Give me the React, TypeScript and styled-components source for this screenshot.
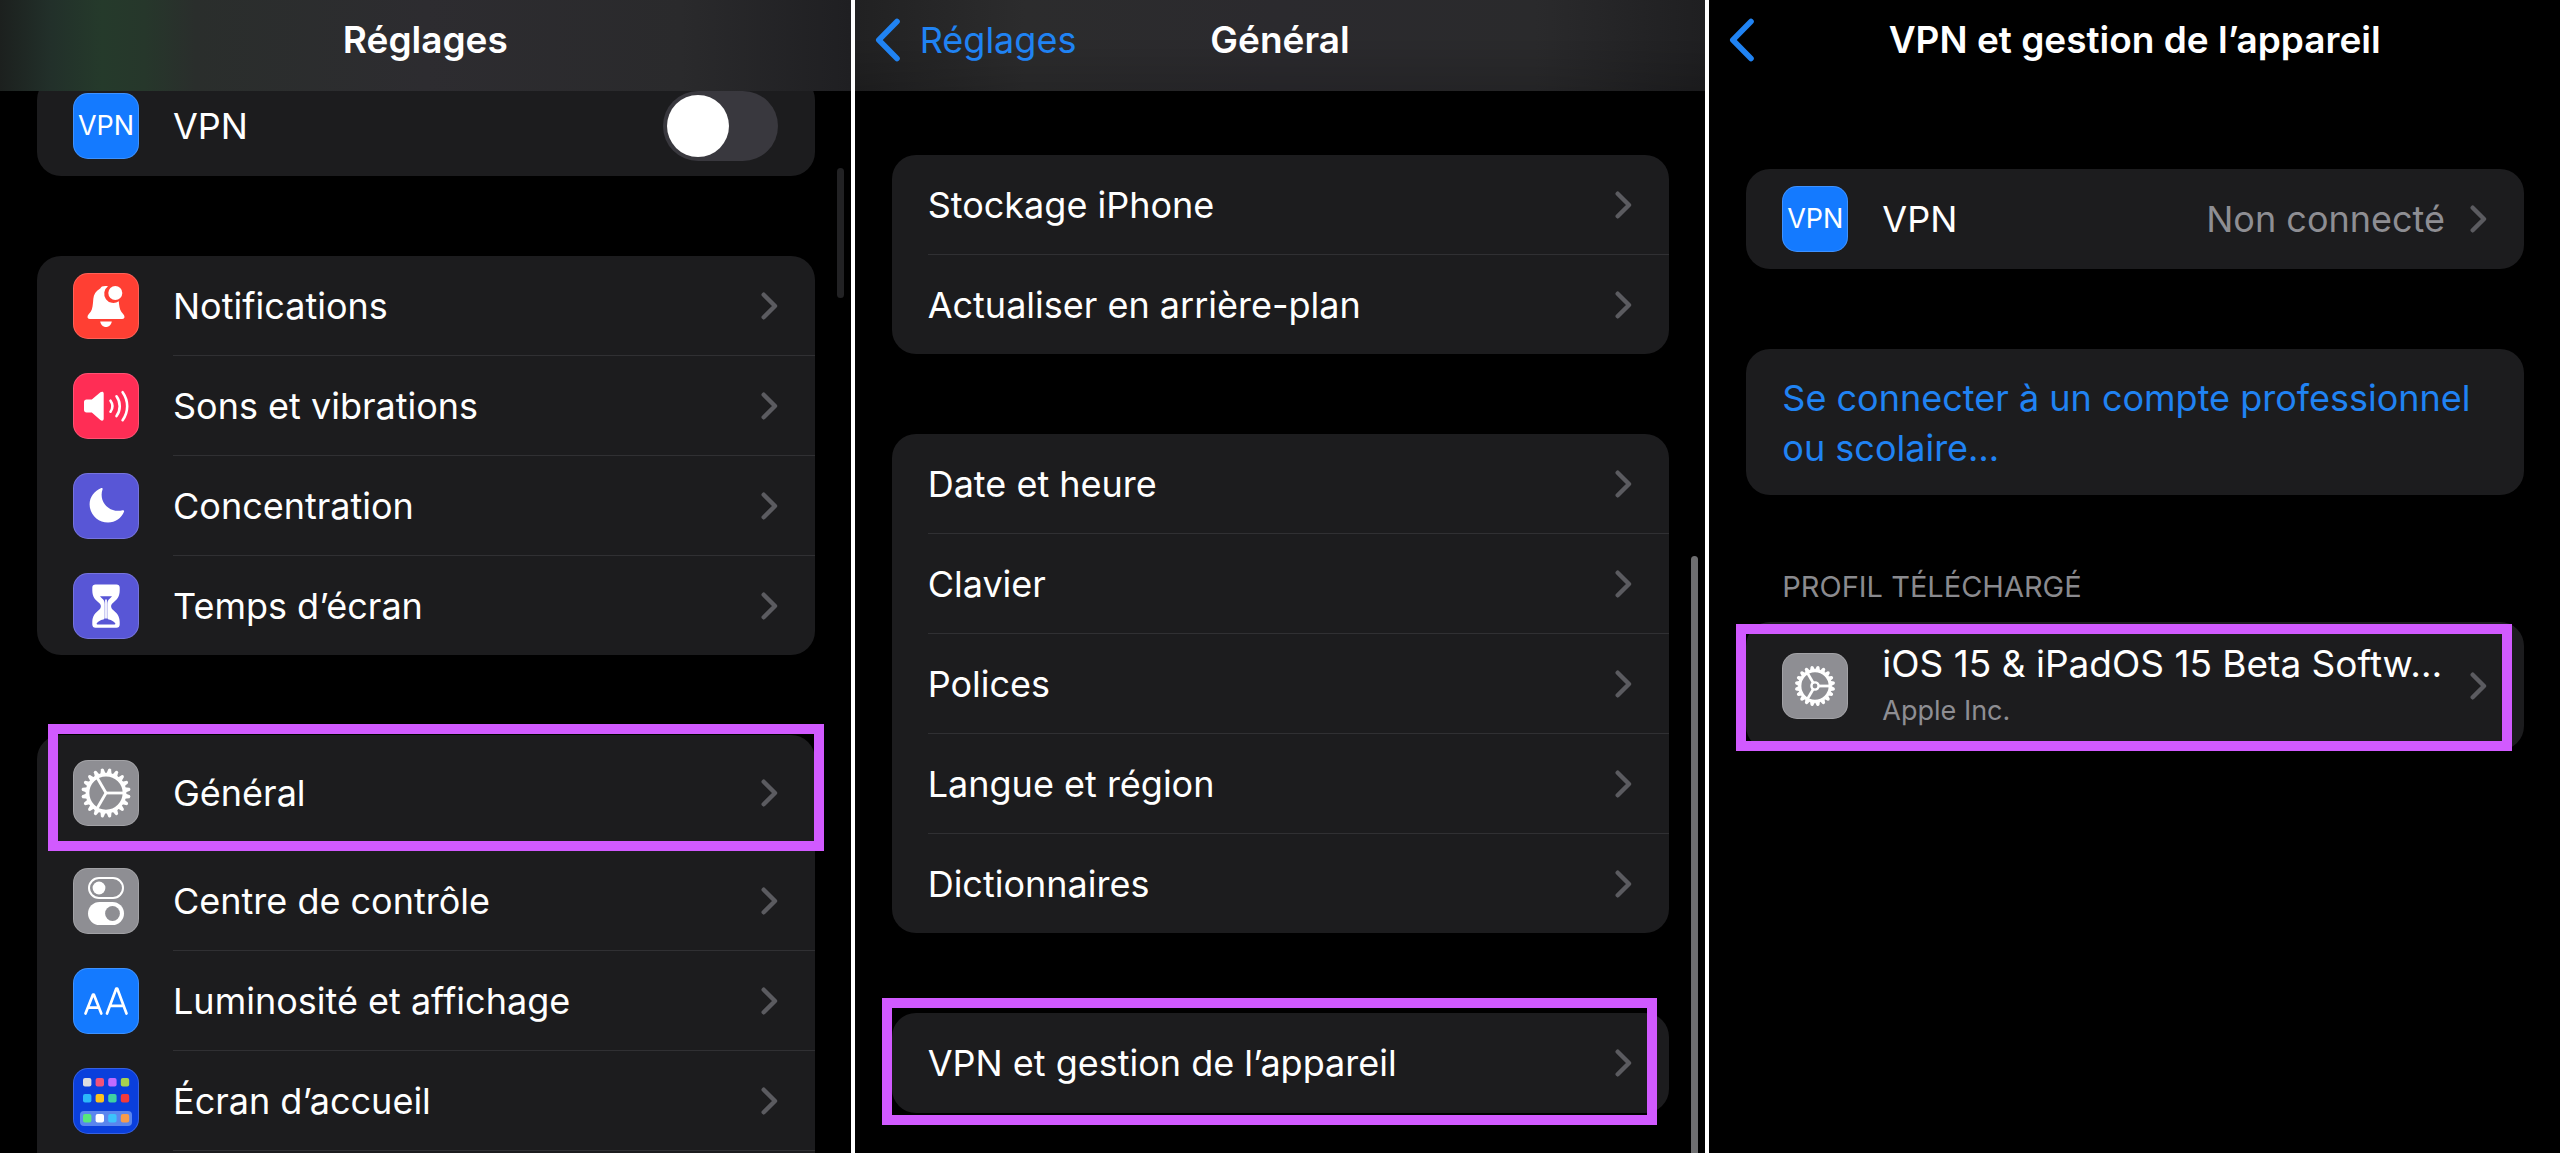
import React from "react";
import styled, { createGlobalStyle, css } from "styled-components";

const GlobalStyle = createGlobalStyle`
  * { box-sizing: border-box; }
  body {
    margin: 0;
    background: #000;
    color: #fff;
    font-family: Inter, "Liberation Sans", sans-serif;
    font-size: 36px;
    line-height: 50px;
    overflow: hidden;
  }
  h1, h2, p, ul { margin: 0; padding: 0; font: inherit; }
  a { color: inherit; text-decoration: none; }
`;

const Board = styled.main`
  display: flex;
  gap: 4px;
  height: 100vh;
  background: #fff;
`;

const Screen = styled.section`
  position: relative;
  flex: 1 1 0;
  min-width: 0;
  overflow: hidden;
  background: #000;
`;

type Tone = "green" | "grey" | "none";

const barTones = {
  green: css`
    background: linear-gradient(
      90deg,
      #1c201e 0%,
      #22302a 6%,
      #253a2b 12%,
      #26372b 17%,
      #2a2e2c 23%,
      #2d2c30 50%,
      #2a2a2c 80%,
      #1f1f22 100%
    );
  `,
  grey: css`
    background:
      linear-gradient(180deg, transparent 40%, #00000026 100%),
      linear-gradient(90deg, #212122 0%, #2c2c2d 20%, #2b2a2e 50%, #2a2a2c 80%, #1f1f21 100%);
  `,
  none: css`
    background: #000;
  `,
};

const Bar = styled.header<{ $tone: Tone }>`
  position: relative;
  z-index: 1;
  display: grid;
  grid-template-columns: 1fr auto 1fr;
  align-items: center;
  height: 91px;
  padding: 0 20px 11px;
  ${(p) => barTones[p.$tone]}
`;

const Title = styled.h1`
  grid-column: 2;
  font-size: 37px;
  font-weight: 600;
  white-space: nowrap;
`;

const Back = styled.a`
  display: flex;
  align-items: center;
  gap: 20px;
  color: #2083f3;
`;

const Content = styled.div<{ $top: number }>`
  display: flex;
  flex-direction: column;
  gap: 80px;
  margin-top: ${(p) => p.$top}px;
  padding: 0 36px 0 37px;
`;

const Card = styled.ul`
  list-style: none;
  border-radius: 24px;
  background: #1c1c1e;
`;

const Item = styled.li`
  position: relative;
`;

const NextItem = styled.li`
  height: 100px;
`;

const rowStyle = css<{ $tall?: number }>`
  display: flex;
  align-items: stretch;
  gap: 34px;
  height: ${(p) => p.$tall ?? 100}px;
  padding-left: 36px;
`;

const RowLink = styled.a<{ $tall?: number }>`
  ${rowStyle}
`;

const RowLabel = styled.label<{ $tall?: number }>`
  ${rowStyle}
`;

const Body = styled.span`
  display: flex;
  flex: 1;
  align-items: center;
  gap: 25px;
  min-width: 0;
  padding-right: 37px;
  ${Item}:not(:last-child) & {
    border-bottom: 1px solid #303033;
  }
`;

const Name = styled.span<{ $detailed?: boolean }>`
  flex: 1;
  min-width: 0;
  font-size: ${(p) => (p.$detailed ? 37 : 36)}px;
  white-space: nowrap;
`;

const Value = styled.span`
  color: #8e8e93;
`;

const Sub = styled.span`
  display: block;
  color: #8e8e93;
  font-size: 27px;
  line-height: 44px;
`;

const Tile = styled.span<{ $bg: string }>`
  display: flex;
  flex: none;
  align-self: center;
  align-items: center;
  justify-content: center;
  width: 66px;
  height: 66px;
  border-radius: 15px;
  background: ${(p) => p.$bg};
  box-shadow: inset 0 0 0 1px #ffffff2e;
  font-size: 27px;
`;

const Switch = styled.input`
  appearance: none;
  width: 115px;
  height: 70px;
  margin: 0;
  padding: 4px;
  border-radius: 35px;
  background: #39383e;
  &::before {
    content: "";
    display: block;
    width: 62px;
    height: 62px;
    border-radius: 50%;
    background: #fff;
  }
  &:checked {
    background: #30d158;
  }
  &:checked::before {
    margin-left: auto;
  }
`;

const Account = styled.a`
  display: block;
  padding: 24px 36px 22px;
  color: #2083f3;
`;

const Group = styled.div`
  display: flex;
  flex-direction: column;
  gap: 15px;
  margin-top: -8px;
`;

const GroupTitle = styled.h2`
  padding-left: 36px;
  color: #8a8a8e;
  font-size: 29px;
  line-height: 40px;
`;

const Highlight = styled.span<{ $left: number; $top: number }>`
  position: absolute;
  left: ${(p) => p.$left}px;
  top: ${(p) => p.$top}px;
  width: calc(100% - 2px);
  height: 127px;
  border: 10px solid #d15aff;
  pointer-events: none;
`;

const Thumb = styled.span<{ $top: string; $height: string; $color: string }>`
  position: absolute;
  top: ${(p) => p.$top};
  right: 7px;
  width: 7px;
  height: ${(p) => p.$height};
  border-radius: 4px;
  background: ${(p) => p.$color};
`;

const Chevron = () => (
  <svg width="17" height="28" viewBox="0 0 17 28" fill="none" aria-hidden="true">
    <path d="M2.7 2.7 14 14 2.7 25.3" stroke="#5b5b60" strokeWidth="4.4" strokeLinecap="round" strokeLinejoin="round" />
  </svg>
);

const BackArrow = () => (
  <svg width="25" height="44" viewBox="0 0 25 44" fill="none" aria-hidden="true">
    <path d="M22 3.5 3.8 22 22 40.5" stroke="currentColor" strokeWidth="5.6" strokeLinecap="round" strokeLinejoin="round" />
  </svg>
);

const Glyph = ({ children }: { children: React.ReactNode }) => (
  <svg width="66" height="66" viewBox="0 0 66 66" fill="none" aria-hidden="true">
    {children}
  </svg>
);

const BellIcon = () => (
  <Glyph>
    <path
      fill="#fff"
      d="M35 13.3c-1.5-.6-4.500-.6-6 .3-.9.6-1.200 1.500-2.200 2.200-4 2.200-6.100 5.700-6.500 10.200-.4 5.500-.8 10-2.600 12.800-1.200 1.900-3.200 3.300-3.200 5.100 0 1.300 1 2 2.300 2h32.400c1.300 0 2.300-.7 2.300-2 0-1.800-2-3.200-3.200-5.100-1.600-2.600-2.200-6.300-2.500-10.600a8.800 8.800 0 0 1-10.800-14.900z"
    />
    <circle cx="42.300" cy="20" r="7" fill="#fff" />
    <path fill="#fff" d="M27.200 48.500h11.600c-.6 3.300-2.900 5.500-5.800 5.500s-5.200-2.200-5.800-5.500z" />
  </Glyph>
);

const SoundIcon = () => (
  <Glyph>
    <path
      fill="#fff"
      d="M13.500 26.500h5.300l8.600-7.200c1.500-1.200 3.300-.7 3.300 1.200v25.300c0 1.900-1.800 2.400-3.300 1.200l-8.600-7.500h-5.300c-1.500 0-2.500-1-2.500-2.500v-8c0-1.500 1-2.500 2.500-2.500z"
    />
    <g stroke="#fff" strokeWidth="2.600" strokeLinecap="round">
      <path d="M37.500 27.700c2.400 3.300 2.400 7.700 0 11" />
      <path d="M43.500 23.300c4.300 5.900 4.300 13.900 0 19.800" />
      <path d="M49.600 19.200c6.100 8.500 6.100 19.500 0 28" />
    </g>
  </Glyph>
);

const MoonIcon = () => (
  <Glyph>
    <path
      fill="#fff"
      d="M28.300 15c.9-.4 1.700.3 1.300 1.300-4.200 11.500 5.600 24.300 20 21 1-.3 1.800.5 1.400 1.500-2.500 6.300-8.700 10.800-15.900 10.800-10.200 0-18.500-8.300-18.500-18.300 0-7.200 4.800-13.600 11.700-16.300z"
    />
  </Glyph>
);

const HourglassIcon = () => (
  <Glyph>
    <path
      fill="#fff"
      d="M22.500 11.500h21c2 0 3.200 1.200 3.200 3v3c0 6.500-3.200 9.300-6 11.700-1.800 1.500-2.600 2.400-2.600 4s.8 2.700 2.600 4.200c2.800 2.300 6 5.200 6 11.600v2.500c0 2-1.200 3.300-3.200 3.300h-21c-2 0-3.200-1.300-3.200-3.300V49c0-6.400 3.200-9.300 6-11.600 1.800-1.500 2.600-2.600 2.600-4.200s-.8-2.500-2.600-4c-2.800-2.400-6-5.200-6-11.700v-3c0-1.800 1.200-3 3.200-3z"
    />
    <path
      fill="#5856d6"
      d="M27 23.300h12c-.6 1-1.500 1.700-2.400 2.500-1.600 1.300-2.300 3-2.300 5.200v13.500c0 1 .5 1.700 1.500 2 2.700.6 5.200 1.900 6.400 3.700.4.700.2 1.200-.6 1.200H24.400c-.8 0-1-.5-.6-1.200 1.200-1.800 3.700-3.100 6.400-3.700 1-.3 1.500-1 1.500-2V31c0-2.200-.7-3.900-2.300-5.200-.9-.8-1.800-1.500-2.400-2.500z"
    />
    <path stroke="#fff" strokeWidth="1.800" d="M33 26.500v19" />
  </Glyph>
);

const Cog = ({ teeth, radius, hub }: { teeth: number; radius: number; hub?: boolean }) => {
  const ring = radius * 0.74;
  const spokes = [0, 120, 240];
  return (
    <Glyph>
      {Array.from({ length: teeth }, (_, i) => (
        <path
          key={i}
          transform={`rotate(${((i + 0.5) * 360) / teeth} 33 33)`}
          d={`M${33 + ring} 30.200 L${33 + radius - 1} 31.600 Q${33 + radius + 0.6} 33 ${33 + radius - 1} 34.400 L${33 + ring} 35.800Z`}
          fill="#fff"
        />
      ))}
      <circle cx="33" cy="33" r={ring} stroke="#fff" strokeWidth={radius * 0.15} />
      {spokes.map((a) => (
        <path
          key={a}
          transform={`rotate(${a} 33 33)`}
          d={`M${hub ? 36 : 33} 33H${33 + ring}`}
          stroke="#fff"
          strokeWidth="2.800"
        />
      ))}
      {hub && <circle cx="33" cy="33" r="3.600" stroke="#fff" strokeWidth="2.400" />}
    </Glyph>
  );
};

const ControlsIcon = () => (
  <Glyph>
    <rect x="16" y="10" width="34" height="20" rx="10" stroke="#fff" strokeWidth="2" />
    <circle cx="26" cy="20" r="6.400" fill="#fff" />
    <rect x="15" y="34" width="36" height="23" rx="11.500" fill="#fff" />
    <circle cx="39.500" cy="45.500" r="7.400" fill="#8e8e93" />
  </Glyph>
);

const LettersIcon = () => (
  <Glyph>
    <g stroke="#fff" strokeWidth="2.700" strokeLinecap="round" strokeLinejoin="round">
      <path d="M12.500 45.500 20 26.500h.8l7.500 19M15 39.700h11" />
      <path d="M34 45.500 43.300 20.500h.9l9.300 25M37 37.800h13.500" />
    </g>
  </Glyph>
);

const homeRows = [
  { y: 10, colors: ["#dcdce0", "#f2527a", "#bf6bff", "#a8d14e"] },
  { y: 26, colors: ["#2bb8fa", "#fcc21b", "#3fd1a2", "#f23a3a"] },
  { y: 46, colors: ["#57e87a", "#ffffff", "#3cc2fb", "#f79b4c"] },
];

const HomeIcon = () => (
  <Glyph>
    <rect x="7" y="43" width="52" height="15" rx="4" fill="#5a86ee" />
    {homeRows.map((row) =>
      row.colors.map((color, i) => (
        <rect key={color} x={10 + i * 12.6} y={row.y} width="8.400" height="8.400" rx="2" fill={color} />
      ))
    )}
  </Glyph>
);

interface RowProps {
  name: string;
  bg?: string;
  icon?: React.ReactNode;
  value?: string;
  sub?: string;
  tall?: number;
  mark?: { left: number; top: number };
}

const Row = ({ name, bg, icon, value, sub, tall, mark }: RowProps) => (
  <Item>
    <RowLink href="#" $tall={tall}>
      {bg && <Tile $bg={bg}>{icon}</Tile>}
      <Body>
        <Name $detailed={Boolean(sub)}>
          {name}
          {sub && <Sub>{sub}</Sub>}
        </Name>
        {value && <Value>{value}</Value>}
        <Chevron />
      </Body>
    </RowLink>
    {mark && <Highlight $left={mark.left} $top={mark.top} />}
  </Item>
);

const blue = "#147aff";
const grey = "#8e8e93";
const indigo = "#5856d6";

const SettingsScreen = () => (
  <Screen>
    <Bar $tone="green">
      <Title>Réglages</Title>
    </Bar>
    <Content $top={-15}>
      <Card>
        <Item>
          <RowLabel htmlFor="vpn">
            <Tile $bg={blue}>VPN</Tile>
            <Body>
              <Name>VPN</Name>
              <Switch id="vpn" type="checkbox" />
            </Body>
          </RowLabel>
        </Item>
      </Card>
      <Card>
        <Row name="Notifications" bg="#ff3f33" icon={<BellIcon />} />
        <Row name="Sons et vibrations" bg="#ff2d55" icon={<SoundIcon />} />
        <Row name="Concentration" bg={indigo} icon={<MoonIcon />} />
        <Row name="Temps d’écran" bg={indigo} icon={<HourglassIcon />} tall={99} />
      </Card>
      <Card>
        <Row name="Général" bg={grey} icon={<Cog teeth={20} radius={25} />} tall={116} mark={{ left: 11, top: -11 }} />
        <Row name="Centre de contrôle" bg={grey} icon={<ControlsIcon />} />
        <Row name="Luminosité et affichage" bg={blue} icon={<LettersIcon />} />
        <Row name="Écran d’accueil" bg="#0a3fdc" icon={<HomeIcon />} />
        <NextItem aria-hidden="true" />
      </Card>
    </Content>
    <Thumb $top="168px" $height="130px" $color="#222224" />
  </Screen>
);

const GeneralScreen = () => (
  <Screen>
    <Bar $tone="grey">
      <Back href="#">
        <BackArrow />
        Réglages
      </Back>
      <Title>Général</Title>
    </Bar>
    <Content $top={64}>
      <Card>
        <Row name="Stockage iPhone" />
        <Row name="Actualiser en arrière-plan" tall={99} />
      </Card>
      <Card>
        <Row name="Date et heure" />
        <Row name="Clavier" />
        <Row name="Polices" />
        <Row name="Langue et région" />
        <Row name="Dictionnaires" tall={99} />
      </Card>
      <Card>
        <Row name="VPN et gestion de l’appareil" mark={{ left: -10, top: -15 }} />
      </Card>
    </Content>
    <Thumb $top="556px" $height="100%" $color="#6e6e70" />
  </Screen>
);

const DeviceScreen = () => (
  <Screen>
    <Bar $tone="none">
      <Back href="#" aria-label="Général">
        <BackArrow />
      </Back>
      <Title>VPN et gestion de l’appareil</Title>
    </Bar>
    <Content $top={78}>
      <Card>
        <Row name="VPN" bg={blue} icon="VPN" value="Non connecté" />
      </Card>
      <Card>
        <Item>
          <Account href="#">Se connecter à un compte professionnel ou scolaire…</Account>
        </Item>
      </Card>
      <Group>
        <GroupTitle>PROFIL TÉLÉCHARGÉ</GroupTitle>
        <Card>
          <Row
            name="iOS 15 & iPadOS 15 Beta Softw…"
            sub="Apple Inc."
            bg={grey}
            icon={<Cog teeth={20} radius={20.5} hub />}
            tall={128}
            mark={{ left: -10, top: 2 }}
          />
        </Card>
      </Group>
    </Content>
  </Screen>
);

export default function App() {
  return (
    <>
      <GlobalStyle />
      <Board>
        <SettingsScreen />
        <GeneralScreen />
        <DeviceScreen />
      </Board>
    </>
  );
}
